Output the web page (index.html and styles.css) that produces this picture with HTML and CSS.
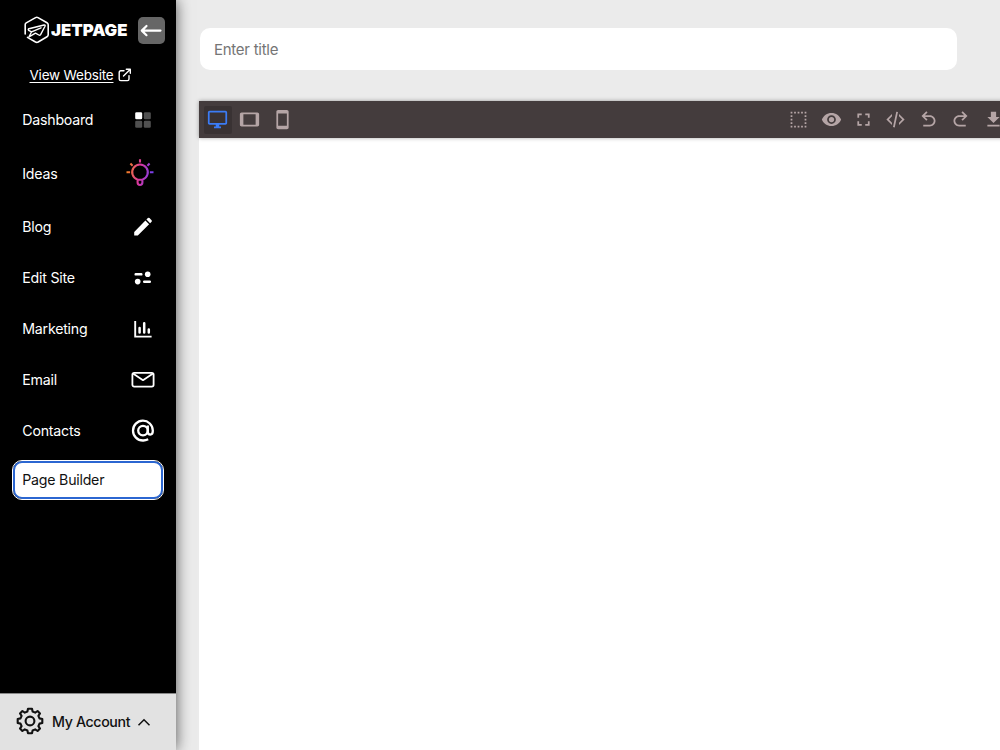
FILE: index.html
```html
<!DOCTYPE html>
<html lang="en">
<head>
<meta charset="utf-8">
<title>Jetpage – Page Builder</title>
<link rel="stylesheet" href="styles.css">
</head>
<body>
<div class="app">
  <aside class="sidebar">
    <div class="brand">
      <svg class="brand-mark" width="26" height="28" viewBox="0 0 26 28" fill="none" stroke="#fff" stroke-width="1.6" stroke-linejoin="round" stroke-linecap="round">
        <path d="M1.2 18V8.6Q1.2 7.5 2.2 6.9L11.6 1.6Q12.8 1 14 1.6L23 6.8Q24.2 7.5 24.2 8.8V18.8Q24.2 20.1 23 20.8L14.2 26Q12.8 26.7 11.5 26L3.5 21.4"/>
        <path stroke-width="1.4" d="M7.6 15.8L4.6 14.3Q3.8 13.4 4.9 12.7L20.1 9Q21.6 8.8 21 10.2L16.6 18.6Q15.9 19.6 14.8 19L11.5 17.2M17 11.8L7.6 15.8L5 20.8L11.5 17.2"/>
      </svg>
      <svg class="brand-name" width="77" height="20" viewBox="0 0 77 20"><text x="0" y="15.8" textLength="76.5" lengthAdjust="spacingAndGlyphs">JETPAGE</text></svg>
      <button class="collapse" aria-label="Collapse">
        <svg width="27" height="27" viewBox="0 0 27 27" fill="none" stroke="#fff" stroke-width="2.2" stroke-linecap="round" stroke-linejoin="round"><path d="M22.5 13.6H4M8.5 9L3.8 13.6L8.5 18.2"/></svg>
      </button>
    </div>
    <a class="visit"><span>View Website</span>
      <svg width="14" height="14" viewBox="0 0 14 14" fill="none" stroke="#fff" stroke-width="1.4" stroke-linecap="round" stroke-linejoin="round"><path d="M6 2.8H2.8Q1.2 2.8 1.2 4.4V11Q1.2 12.6 2.8 12.6H9.4Q11 12.6 11 11V7.6M8.3 1.2H12.3V5.2M12.1 1.4L5.5 8"/></svg>
    </a>
    <nav class="menu">
      <a class="item"><span>Dashboard</span>
        <svg width="24" height="24" viewBox="0 0 24 24"><rect x="4.2" y="4.2" width="7" height="7" rx="1.3" fill="#fff"/><g fill="#505050"><rect x="12.8" y="4.2" width="7" height="7" rx="1.3"/><rect x="4.2" y="12.7" width="7" height="7" rx="1.3"/><rect x="12.8" y="12.7" width="7" height="7" rx="1.3"/></g></svg>
      </a>
      <a class="item ideas"><span>Ideas</span>
        <svg width="28" height="28" viewBox="0 0 28 28" fill="none" stroke="url(#glow)" stroke-width="2.1">
          <defs><linearGradient id="glow" gradientUnits="userSpaceOnUse" x1="1" y1="10" x2="27" y2="14"><stop offset="0" stop-color="#f58220"/><stop offset=".5" stop-color="#d936a0"/><stop offset="1" stop-color="#7340f0"/></linearGradient></defs>
          <path d="M11.4 20.6A7.8 7.8 0 1 1 16.6 20.6M11 20.8H17M11.6 20.4V23.6A2.4 2.4 0 0 0 16.4 23.6V20.4M4.4 4.6L6.6 6.7M23.6 4.6L21.4 6.7M.5 13.3H4.1M23.9 13.3H27.5M14.01 .3L14 3.4"/>
        </svg>
      </a>
      <a class="item"><span>Blog</span>
        <svg width="24" height="24" viewBox="0 0 24 24" fill="#fff"><path d="M3.2 20.4V16.9L14.4 5.6L18.1 9.3L6.8 20.6H3.5ZM15.4 4.6L16.9 3.1Q17.7 2.5 18.5 3.1L20.6 5.2Q21.2 6 20.6 6.8L19.1 8.3Z"/></svg>
      </a>
      <a class="item"><span>Edit Site</span>
        <svg width="24" height="24" viewBox="0 0 24 24" fill="#fff"><rect x="3.5" y="7" width="8" height="2.6" rx="1.2"/><circle cx="16.7" cy="8.3" r="2.8"/><circle cx="6.7" cy="15.6" r="2.8"/><rect x="12" y="14.4" width="8" height="2.6" rx="1.2"/></svg>
      </a>
      <a class="item"><span>Marketing</span>
        <svg width="24" height="24" viewBox="0 0 24 24" fill="none" stroke="#fff" stroke-width="1.9"><path d="M4.2 4V19.6H20.6"/><path stroke-width="2.5" stroke-linecap="round" d="M8.6 11V15.5M13.2 6.3V15.5M17.8 12.5V15.5"/></svg>
      </a>
      <a class="item"><span>Email</span>
        <svg width="24" height="24" viewBox="0 0 24 24" fill="none" stroke="#fff" stroke-width="1.8" stroke-linejoin="round"><rect x="1.4" y="4.8" width="21.2" height="13.8" rx="1.8"/><path d="M2 5.6L12 12.2L22 5.6"/></svg>
      </a>
      <a class="item"><span>Contacts</span>
        <svg width="24" height="24" viewBox="0 0 24 24" fill="none" stroke="#fff" stroke-width="2.3"><circle cx="12" cy="11.6" r="4.8"/><path d="M16.8 6.4V12.8Q16.8 15.6 19.3 15.6T21.8 12.1V11.4A9.9 9.9 0 1 0 11.9 21.5Q14.5 21.6 17.2 20.3"/></svg>
      </a>
      <a class="item active"><span>Page Builder</span></a>
    </nav>
    <div class="account">
      <svg width="28" height="28" viewBox="0 0 28 28" fill="none" stroke="#111" stroke-width="2.1" stroke-linejoin="round"><circle cx="14" cy="14" r="4.4"/><path d="M12 1.7H16L16.6 4.5L19.2 5.6L21.6 4L24 6.4L22.4 8.8L23.5 11.4L26.3 12V16L23.5 16.6L22.4 19.2L24 21.6L21.6 24L19.2 22.4L16.6 23.5L16 26.3H12L11.4 23.5L8.8 22.4L6.4 24L4 21.6L5.6 19.2L4.5 16.6L1.7 16V12L4.5 11.4L5.6 8.8L4 6.4L6.4 4L8.8 5.6L11.4 4.5Z"/></svg>
      <span>My Account</span>
      <svg class="chevron" width="14" height="10" viewBox="0 0 14 10" fill="none" stroke="#111" stroke-width="1.5"><path d="M1.5 8.3L7 2.7L12.5 8.3"/></svg>
    </div>
  </aside>
  <main class="main">
    <input class="title" type="text" placeholder="Enter title">
    <section class="editor">
      <div class="toolbar">
        <div class="group">
          <button class="tool on" aria-label="Desktop"><svg viewBox="0 0 24 24"><path d="M21 16H3V4H21M21 2H3C1.9 2 1 2.9 1 4V16C1 17.1 1.9 18 3 18H10V20H8V22H16V20H14V18H21C22.1 18 23 17.1 23 16V4C23 2.9 22.1 2 21 2Z"/></svg></button>
          <button class="tool" aria-label="Tablet"><svg viewBox="0 0 24 24"><path d="M19 18H5V6H19M21 4H3C1.9 4 1 4.9 1 6V18C1 19.1 1.9 20 3 20H21C22.1 20 23 19.1 23 18V6C23 4.9 22.1 4 21 4Z"/></svg></button>
          <button class="tool" aria-label="Mobile"><svg viewBox="0 0 24 24"><path d="M17 19H7V5H17M17 1H7C5.9 1 5 1.9 5 3V21C5 22.1 5.9 23 7 23H17C18.1 23 19 22.1 19 21V3C19 1.9 18.1 1 17 1Z"/></svg></button>
        </div>
        <div class="group">
          <button class="tool" aria-label="Outlines"><svg viewBox="0 0 24 24"><path d="M15 5H17V3H15M15 21H17V19H15M11 5H13V3H11M19 5H21V3H19M19 9H21V7H19M19 21H21V19H19M19 13H21V11H19M19 17H21V15H19M3 5H5V3H3M3 9H5V7H3M3 13H5V11H3M3 17H5V15H3M3 21H5V19H3M11 21H13V19H11M7 21H9V19H7M7 5H9V3H7Z"/></svg></button>
          <button class="tool" aria-label="Preview"><svg viewBox="0 0 24 24"><path d="M12 9A3 3 0 0 0 9 12A3 3 0 0 0 12 15A3 3 0 0 0 15 12A3 3 0 0 0 12 9M12 17A5 5 0 0 1 7 12A5 5 0 0 1 12 7A5 5 0 0 1 17 12A5 5 0 0 1 12 17M12 4.5C7 4.5 2.73 7.61 1 12C2.73 16.39 7 19.5 12 19.5C17 19.5 21.27 16.39 23 12C21.27 7.61 17 4.5 12 4.5Z"/></svg></button>
          <button class="tool" aria-label="Fullscreen"><svg viewBox="0 0 24 24"><path d="M5 5H10V7H7V10H5V5M14 5H19V10H17V7H14V5M17 14H19V19H14V17H17V14M10 17V19H5V14H7V17H10Z"/></svg></button>
          <button class="tool" aria-label="Code"><svg viewBox="0 0 24 24"><path d="M12.89 3L14.85 3.4L11.11 21L9.15 20.6L12.89 3M19.59 12L16 8.41V5.58L22.42 12L16 18.41V15.58L19.59 12M1.58 12L8 5.58V8.41L4.41 12L8 15.58V18.41L1.58 12Z"/></svg></button>
          <button class="tool" aria-label="Undo"><svg viewBox="0 0 24 24"><path d="M20 13.5C20 17.09 17.09 20 13.5 20H6V18H13.5C16 18 18 16 18 13.5S16 9 13.5 9H7.83L10.91 12.09L9.5 13.5L4 8L9.5 2.5L10.92 3.91L7.83 7H13.5C17.09 7 20 9.91 20 13.5Z"/></svg></button>
          <button class="tool" aria-label="Redo"><svg viewBox="0 0 24 24"><path d="M10.5 18H18V20H10.5C6.91 20 4 17.09 4 13.5S6.91 7 10.5 7H16.17L13.08 3.91L14.5 2.5L20 8L14.5 13.5L13.09 12.09L16.17 9H10.5C8 9 6 11 6 13.5S8 18 10.5 18Z"/></svg></button>
          <button class="tool" aria-label="Import"><svg viewBox="0 0 24 24"><path d="M5 20H19V18H5M19 9H15V3H9V9H5L12 16L19 9Z"/></svg></button>
        </div>
      </div>
      <div class="canvas"></div>
    </section>
  </main>
</div>
</body>
</html>
```
FILE: styles.css
```css
* { box-sizing: border-box; }
body { margin: 0; overflow: hidden; font-family: Inter, "Liberation Sans", sans-serif; font-size: 14px; }
button { border: 0; padding: 0; background: none; }
svg { display: block; flex: none; }
.app { display: flex; height: 750px; background: #ebebeb; }
.sidebar { display: flex; flex-direction: column; width: 176px; flex: none; background: #000; color: #fff; box-shadow: 0 0 14px rgba(0, 0, 0, .65); z-index: 1; }
.brand { display: flex; align-items: center; padding: 16px 0 0 24px; height: 44px; }
.brand-name { margin-left: 1px; }
.brand-name text { font-size: 16.6px; font-weight: 900; fill: #fff; }
.collapse { width: 27px; height: 27px; margin-left: 10px; border-radius: 5px; background: #666; }
.visit { display: flex; align-items: center; gap: 5px; height: 20px; margin: 21px 0 9px 29.5px; font-size: 13.5px; letter-spacing: -.2px; }
.visit span { text-decoration: underline; text-underline-offset: 2px; }
.menu { display: flex; flex-direction: column; }
.item { display: flex; align-items: center; justify-content: space-between; height: 51px; padding: 0 21.4px 0 22.3px; font-size: 14.2px; letter-spacing: -.24px; }
.ideas { height: 56px; padding-right: 22px; }
.active { height: 38px; margin: 5px 13px 0; padding: 0 7.3px 1px; color: #111; background: #fff; border: 2px solid #2b66d1; border-radius: 9px; outline: 1px solid #fff; }
.account { display: flex; align-items: center; height: 57px; margin-top: auto; padding: 0 0 3px 16px; background: #e2e2e2; border-top: 1px solid #888; color: #111; font-size: 14.2px; font-weight: 500; letter-spacing: -.36px; }
.account span { margin: 2px 7px 0 8px; }
.chevron { margin-top: 2px; }
.main { flex: 1; min-width: 0; padding: 28px 0 0 23px; overflow: hidden; display: flex; flex-direction: column; }
.title { width: 757px; height: 42px; flex: none; margin: 0 0 31px 1px; padding: 0 14px; border: 0; border-radius: 10px; background: #fff; font: 15px Inter, "Liberation Sans", sans-serif; letter-spacing: -.26px; }
.title::placeholder { color: #757575; }
.editor { display: flex; flex-direction: column; flex: 1; width: 813px; }
.toolbar { display: flex; justify-content: space-between; align-items: center; height: 37px; padding: 0 5px 0 4.6px; background: #443c3d; box-shadow: 0 0 4px rgba(0, 0, 0, .35); z-index: 1; }
.group { display: flex; gap: 4.4px; }
.tool { display: flex; align-items: center; justify-content: center; width: 28px; height: 28px; border-radius: 2px; color: #b5a5a6; }
.tool svg { width: 21px; height: 21px; fill: currentColor; }
.on { color: #3b7cf5; background: #393233; }
.canvas { flex: 1; background: #fff; }
```
